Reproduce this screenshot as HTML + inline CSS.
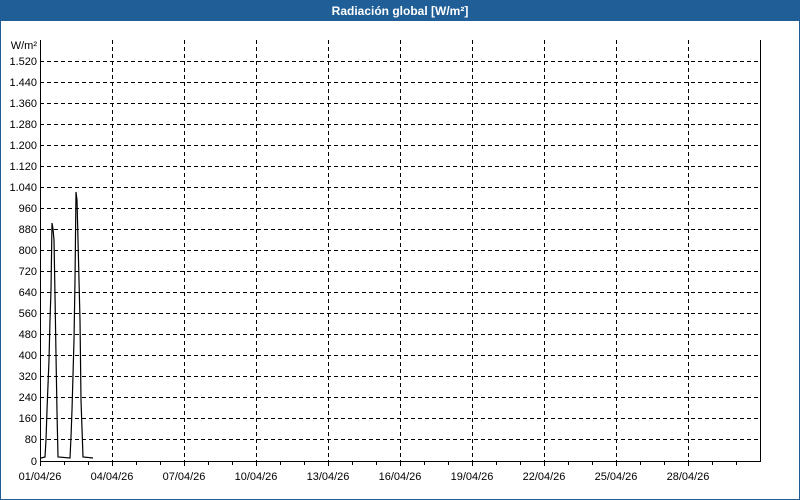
<!DOCTYPE html>
<html><head><style>
body{margin:0;width:800px;height:500px;overflow:hidden;background:#fff;font-family:"Liberation Sans",sans-serif;}
</style></head><body>
<svg width="800" height="500" xmlns="http://www.w3.org/2000/svg" style="display:block">
<rect x="0" y="0" width="800" height="500" fill="#fff"/>
<rect x="0" y="0" width="800" height="21" fill="#1f5e96"/>
<rect x="0.5" y="0.5" width="799" height="499" fill="none" stroke="#1f5e96"/>
<text x="400" y="15" fill="#fff" font-size="12" font-weight="bold" text-anchor="middle">Radiación global [W/m²]</text>
<g stroke="#000" stroke-width="1" stroke-dasharray="4,3" shape-rendering="crispEdges">
<path d="M40 61.5H760M40 82.5H760M40 103.5H760M40 124.5H760M40 145.5H760M40 166.5H760M40 187.5H760M40 208.5H760M40 229.5H760M40 250.5H760M40 271.5H760M40 292.5H760M40 313.5H760M40 334.5H760M40 355.5H760M40 376.5H760M40 397.5H760M40 418.5H760M40 439.5H760"/>
<path d="M112.5 40V461M184.5 40V461M256.5 40V461M328.5 40V461M400.5 40V461M472.5 40V461M544.5 40V461M616.5 40V461M688.5 40V461"/>
</g>
<g stroke="#000" fill="none" shape-rendering="crispEdges">
<path d="M40.5 40V461.5H760.5V40"/>
<path d="M40.5 461v5M64.5 461v4M88.5 461v4M112.5 461v5M136.5 461v4M160.5 461v4M184.5 461v5M208.5 461v4M232.5 461v4M256.5 461v5M280.5 461v4M304.5 461v4M328.5 461v5M352.5 461v4M376.5 461v4M400.5 461v5M424.5 461v4M448.5 461v4M472.5 461v5M496.5 461v4M520.5 461v4M544.5 461v5M568.5 461v4M592.5 461v4M616.5 461v5M640.5 461v4M664.5 461v4M688.5 461v5M712.5 461v4M736.5 461v4"/>
</g>
<polyline fill="none" stroke="#000" stroke-width="1.2" points="41,458 45,457 46,440 47,410 49,360 50,320 51,290 52,223 53,229 54,240 55,295 56,355 57,412 58,457 70,458 71,437 72,410 74,340 75,280 76,192 77,200 78,240 80,320 81,400 83,457 93,458"/>
<g font-size="11" fill="#000" text-anchor="end">
<text x="37" y="65">1.520</text><text x="37" y="86">1.440</text><text x="37" y="107">1.360</text><text x="37" y="128">1.280</text><text x="37" y="149">1.200</text><text x="37" y="170">1.120</text><text x="37" y="191">1.040</text><text x="37" y="212">960</text><text x="37" y="233">880</text><text x="37" y="254">800</text><text x="37" y="275">720</text><text x="37" y="296">640</text><text x="37" y="317">560</text><text x="37" y="338">480</text><text x="37" y="359">400</text><text x="37" y="380">320</text><text x="37" y="401">240</text><text x="37" y="422">160</text><text x="37" y="443">80</text><text x="37" y="465">0</text>
<text x="37" y="49">W/m²</text>
</g>
<g font-size="11" fill="#000" text-anchor="middle">
<text x="40" y="480">01/04/26</text><text x="112" y="480">04/04/26</text><text x="184" y="480">07/04/26</text><text x="256" y="480">10/04/26</text><text x="328" y="480">13/04/26</text><text x="400" y="480">16/04/26</text><text x="472" y="480">19/04/26</text><text x="544" y="480">22/04/26</text><text x="616" y="480">25/04/26</text><text x="688" y="480">28/04/26</text>
</g>
</svg>
</body></html>
